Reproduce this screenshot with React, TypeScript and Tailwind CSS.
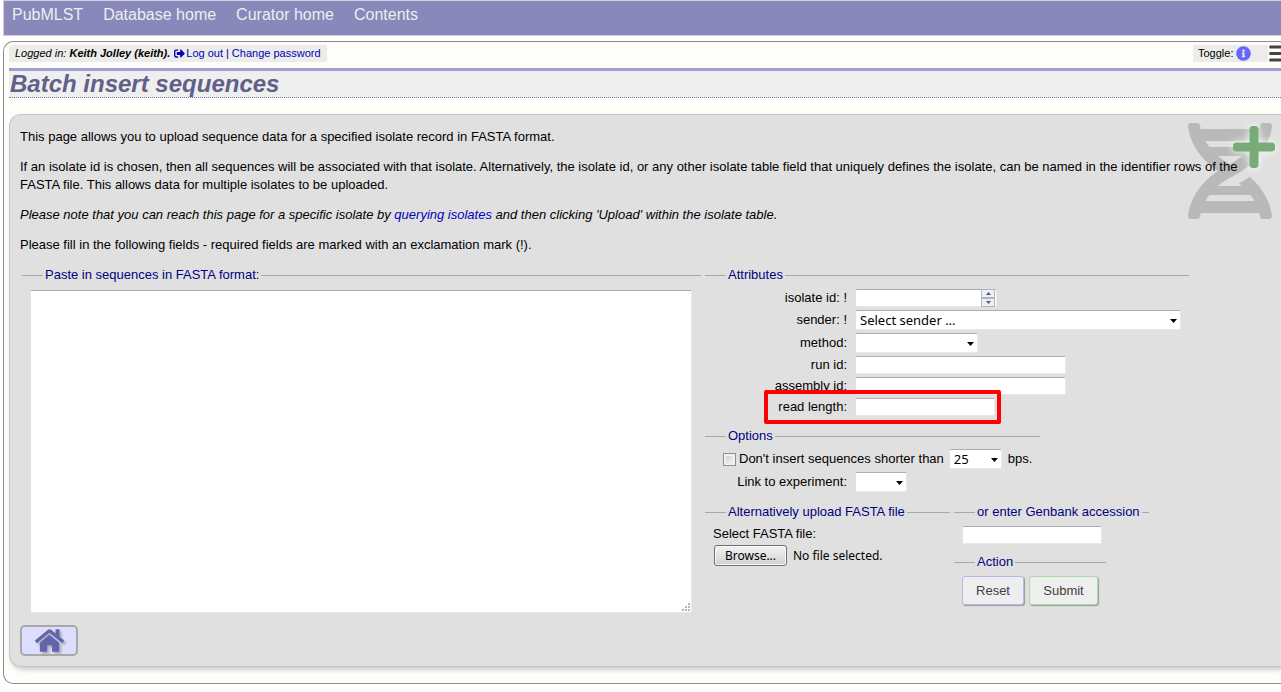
import { useRef, useState, type ReactNode } from "react";
import { FaBars, FaDna, FaHome, FaInfoCircle, FaPlus, FaSignOutAlt } from "react-icons/fa";

const navLinks = ["PubMLST", "Database home", "Curator home", "Contents"];

const box =
  "block rounded-[2px] border border-t-[#abadb3] border-r-[#e3e9ef] border-b-[#e3e9ef] border-l-[#e2e3ea] bg-white";

function Group({
  title,
  className = "",
  bodyClass = "",
  children,
}: {
  title: string;
  className?: string;
  bodyClass?: string;
  children: ReactNode;
}) {
  return (
    <fieldset className={`min-w-0 border-t border-[#a8a8a8] ${className}`}>
      <legend className="ml-[21px] px-[2px] whitespace-nowrap text-[#000080]">{title}</legend>
      <div className={bodyClass}>{children}</div>
    </fieldset>
  );
}

function Select({ id, className = "", options }: { id: string; className?: string; options: string[] }) {
  return (
    <span className="relative inline-block">
      <select
        id={id}
        className={`${box} h-5 appearance-none pl-1 font-['Noto_Sans',sans-serif] text-[13px] leading-[18px] text-black ${className}`}
      >
        {options.map((option) => (
          <option key={option}>{option}</option>
        ))}
      </select>
      <svg className="pointer-events-none absolute top-[9px] right-1 h-1 w-[7px]" viewBox="0 0 7 4" aria-hidden="true">
        <path d="M0 0h7L3.5 4z" fill="#000" />
      </svg>
    </span>
  );
}

function Field({ id, label, children }: { id: string; label: string; children: ReactNode }) {
  return (
    <div className="relative flex items-center gap-2">
      <label htmlFor={id} className="-my-px w-[142px] text-right">
        {label}
      </label>
      {children}
    </div>
  );
}

function NumberBox({ id }: { id: string }) {
  const ref = useRef<HTMLInputElement>(null);
  const step = "flex h-[9px] w-[14px] items-center justify-center border border-[#b4b4bc] bg-[#f0f0f0]";
  return (
    <span className="relative inline-block">
      <input
        ref={ref}
        id={id}
        type="number"
        className={`${box} h-[18px] w-[142px] px-1 [appearance:textfield] [&::-webkit-inner-spin-button]:appearance-none`}
      />
      <span className="absolute top-0 right-[2px] flex flex-col bg-white">
        <button type="button" aria-label="Increase" className={step} onClick={() => ref.current?.stepUp()}>
          <svg className="h-[3px] w-[5px]" viewBox="0 0 5 3" aria-hidden="true">
            <path d="M0 3h5L2.500 0z" fill="#4455aa" />
          </svg>
        </button>
        <button type="button" aria-label="Decrease" className={step} onClick={() => ref.current?.stepDown()}>
          <svg className="h-[3px] w-[5px]" viewBox="0 0 5 3" aria-hidden="true">
            <path d="M0 0h5L2.500 3z" fill="#4455aa" />
          </svg>
        </button>
      </span>
    </span>
  );
}

function FilePicker() {
  const ref = useRef<HTMLInputElement>(null);
  const [name, setName] = useState("No file selected.");
  return (
    <div className="mt-[2px] ml-[9px] flex items-center gap-[6px] font-['Noto_Sans',sans-serif] text-[12px]">
      <input
        ref={ref}
        id="fasta"
        type="file"
        className="hidden"
        onChange={(e) => setName(e.target.files?.[0]?.name ?? "No file selected.")}
      />
      <button
        type="button"
        onClick={() => ref.current?.click()}
        className="h-[21px] w-[73px] rounded-[3px] border border-[#707070] bg-linear-to-b from-[#f4f4f4] to-[#d0d0d0] leading-[18px] shadow-[inset_0_0_0_1px_#f8f8f8]"
      >
        Browse...
      </button>
      <span>{name}</span>
    </div>
  );
}

export default function App() {
  return (
    <div className="overflow-hidden bg-white pb-2 pl-[3px] font-['Liberation_Sans',Arial,sans-serif] text-[13px] leading-[18px] text-black">
      <nav className="flex h-9 gap-5 border border-r-0 border-[#d0d0dc] bg-[#8888bb] px-2 pt-1 text-[16px] leading-5 text-[#eeeeee]">
        {navLinks.map((text) => (
          <a key={text} href="#">
            {text}
          </a>
        ))}
      </nav>

      <main className="mt-[5px] rounded-l-[10px] border border-r-0 border-[#8c8c8c] bg-[#fdfdf9] pt-[3px] pb-4 pl-[5px]">
        <div className="flex justify-between text-[11px] leading-[17px]">
          <div className="flex items-center bg-[#ececea] px-[6px]">
            <i>
              Logged in: <b>Keith Jolley (keith).</b>
            </i>
            <a href="#" className="ml-1 flex items-center gap-px text-[#0000bb]">
              <FaSignOutAlt className="size-[11px]" />
              Log out
            </a>
            <span className="mx-[3px] text-[#000080]">|</span>
            <a href="#" className="text-[#0000bb]">
              Change password
            </a>
          </div>
          <div className="-mr-[6px] flex">
            <div className="flex w-[75px] items-center gap-[3px] bg-[#ececea] pl-[5px]">
              Toggle:
              <button type="button" aria-label="Toggle information">
                <FaInfoCircle className="size-[15px] text-[#6666ff]" />
              </button>
            </div>
            <button type="button" aria-label="Menu" className="flex h-[17px] w-[19px] items-center">
              <FaBars className="size-[21px] shrink-0 text-[#444444]" />
            </button>
          </div>
        </div>

        <h1 className="mt-[6px] h-[30px] border-t-[3px] border-b border-t-[#9f9fd3] border-b-[#7777aa] bg-[#efefef] pl-px text-[24px] leading-[26px] font-bold text-[#606088] italic [border-bottom-style:dotted]">
          Batch insert sequences
        </h1>

        <section className="relative mt-4 flex flex-col gap-3 rounded-l-[12px] border border-r-0 border-[#c4c4c4] bg-[#e0e0e0] pt-[13px] pb-[10px] pl-[10px] shadow-[2px_3px_4px_#d0d0d0]">
          <div className="absolute top-2 right-[9px] h-24 w-[84px]" aria-hidden="true">
            <FaDna className="h-24 w-[84px] text-[#b9b9b9]" />
            <FaPlus className="absolute top-0 -right-[3px] h-12 w-[42px] text-[#77ab77] drop-shadow-[0_0_4px_#ffffff]" />
          </div>

          <p className="relative">
            This page allows you to upload sequence data for a specified isolate record in FASTA format.
          </p>
          <p className="relative pr-4">
            If an isolate id is chosen, then all sequences will be associated with that isolate. Alternatively, the
            isolate id, or any other isolate table field that uniquely defines the isolate, can be named in the
            identifier rows of the FASTA file. This allows data for multiple isolates to be uploaded.
          </p>
          <p className="relative italic">
            Please note that you can reach this page for a specific isolate by{" "}
            <a href="#" className="text-[#0000bb]">
              querying isolates
            </a>{" "}
            and then clicking 'Upload' within the isolate table.
          </p>
          <p className="relative">
            Please fill in the following fields - required fields are marked with an exclamation mark (!).
          </p>

          <form className="ml-[2px] flex items-start gap-1" onSubmit={(e) => e.preventDefault()}>
            <Group title="Paste in sequences in FASTA format:" bodyClass="pt-[6px] pr-[9px] pl-2">
              <div className="relative w-[662px]">
                <textarea
                  aria-label="Paste in sequences in FASTA format"
                  className={`${box} h-[323px] w-full resize-none`}
                />
                <svg
                  className="pointer-events-none absolute right-[2px] bottom-[2px] size-2"
                  viewBox="0 0 8 8"
                  aria-hidden="true"
                >
                  <path
                    d="M6 0h2v2H6zM3 3h2v2H3zM6 3h2v2H6zM0 6h2v2H0zM3 6h2v2H3zM6 6h2v2H6z"
                    fill="#b4b4b4"
                  />
                </svg>
              </div>
            </Group>

            <div className="flex flex-col items-start">
              <Group title="Attributes" className="w-[484px]" bodyClass="pt-[5px] pb-[11px]">
                <div className="flex flex-col gap-[3px]">
                  <Field id="isolate" label="isolate id: !">
                    <NumberBox id="isolate" />
                  </Field>
                  <Field id="sender" label="sender: !">
                    <Select id="sender" className="w-[326px]" options={["Select sender ..."]} />
                  </Field>
                  <Field id="method" label="method:">
                    <Select id="method" className="w-[123px]" options={[""]} />
                  </Field>
                  <Field id="run" label="run id:">
                    <input id="run" type="text" className={`${box} h-[18px] w-[211px] px-1`} />
                  </Field>
                  <Field id="assembly" label="assembly id:">
                    <input id="assembly" type="text" className={`${box} h-[18px] w-[211px] px-1`} />
                  </Field>
                  <Field id="length" label="read length:">
                    <input id="length" type="text" className={`${box} h-[18px] w-[140px] px-1`} />
                    <span className="pointer-events-none absolute -top-2 left-[59px] h-[34px] w-[237px] rounded-[2px] border-4 border-[#ff0000]" />
                  </Field>
                </div>
              </Group>

              <Group title="Options" className="w-[335px]" bodyClass="pt-1 pb-[11px]">
                <div className="flex flex-col gap-[3px]">
                  <div className="flex items-center pl-[18px]">
                    <input
                      id="shorter"
                      type="checkbox"
                      className="mr-[3px] size-[13px] appearance-none border border-[#8e8f8f] bg-linear-to-br from-[#cccccc] to-[#f8f8f8] shadow-[inset_0_0_0_2px_#f0f0f0] checked:bg-[#4466bb]"
                    />
                    <label htmlFor="shorter">Don't insert sequences shorter than</label>
                    <span className="ml-[5px] flex">
                      <Select id="bps" className="w-[53px]" options={["25"]} />
                    </span>
                    <label htmlFor="bps" className="ml-[6px]">
                      bps.
                    </label>
                  </div>
                  <Field id="experiment" label="Link to experiment:">
                    <Select id="experiment" className="w-[52px]" options={[""]} />
                  </Field>
                </div>
              </Group>

              <div className="flex items-start gap-1">
                <Group title="Alternatively upload FASTA file" className="w-[245px]" bodyClass="pt-1">
                  <label htmlFor="fasta" className="ml-2 block">
                    Select FASTA file:
                  </label>
                  <FilePicker />
                </Group>
                <div className="flex flex-col items-start">
                  <Group title="or enter Genbank accession" className="w-[195px]" bodyClass="pt-[5px] pb-[9px] pl-2">
                    <input aria-label="Genbank accession" type="text" className={`${box} h-[18px] w-[140px] px-1`} />
                  </Group>
                  <Group title="Action" className="w-[152px]" bodyClass="pt-[5px] pl-2">
                    <div className="flex gap-[5px] text-[#404040]">
                      <button
                        type="reset"
                        className="h-[29px] w-[62px] rounded-[3px] border border-[#b8b8ec] bg-[#eeeeee] shadow-[1px_1px_1px_#999999]"
                      >
                        Reset
                      </button>
                      <button
                        type="submit"
                        className="h-[29px] w-[69px] rounded-[3px] border border-[#a8dca8] bg-[#eeeeee] shadow-[1px_1px_1px_#999999]"
                      >
                        Submit
                      </button>
                    </div>
                  </Group>
                </div>
              </div>
            </div>
          </form>

          <a
            href="#"
            aria-label="Home"
            className="flex h-[31px] w-[58px] items-center justify-center rounded-[5px] border-2 border-[#a8a8a8] bg-[#ddddff]"
          >
            <FaHome className="size-[29px] text-[#6464ac] drop-shadow-[2px_2px_1px_#aaaaaa]" />
          </a>
        </section>
      </main>
    </div>
  );
}
